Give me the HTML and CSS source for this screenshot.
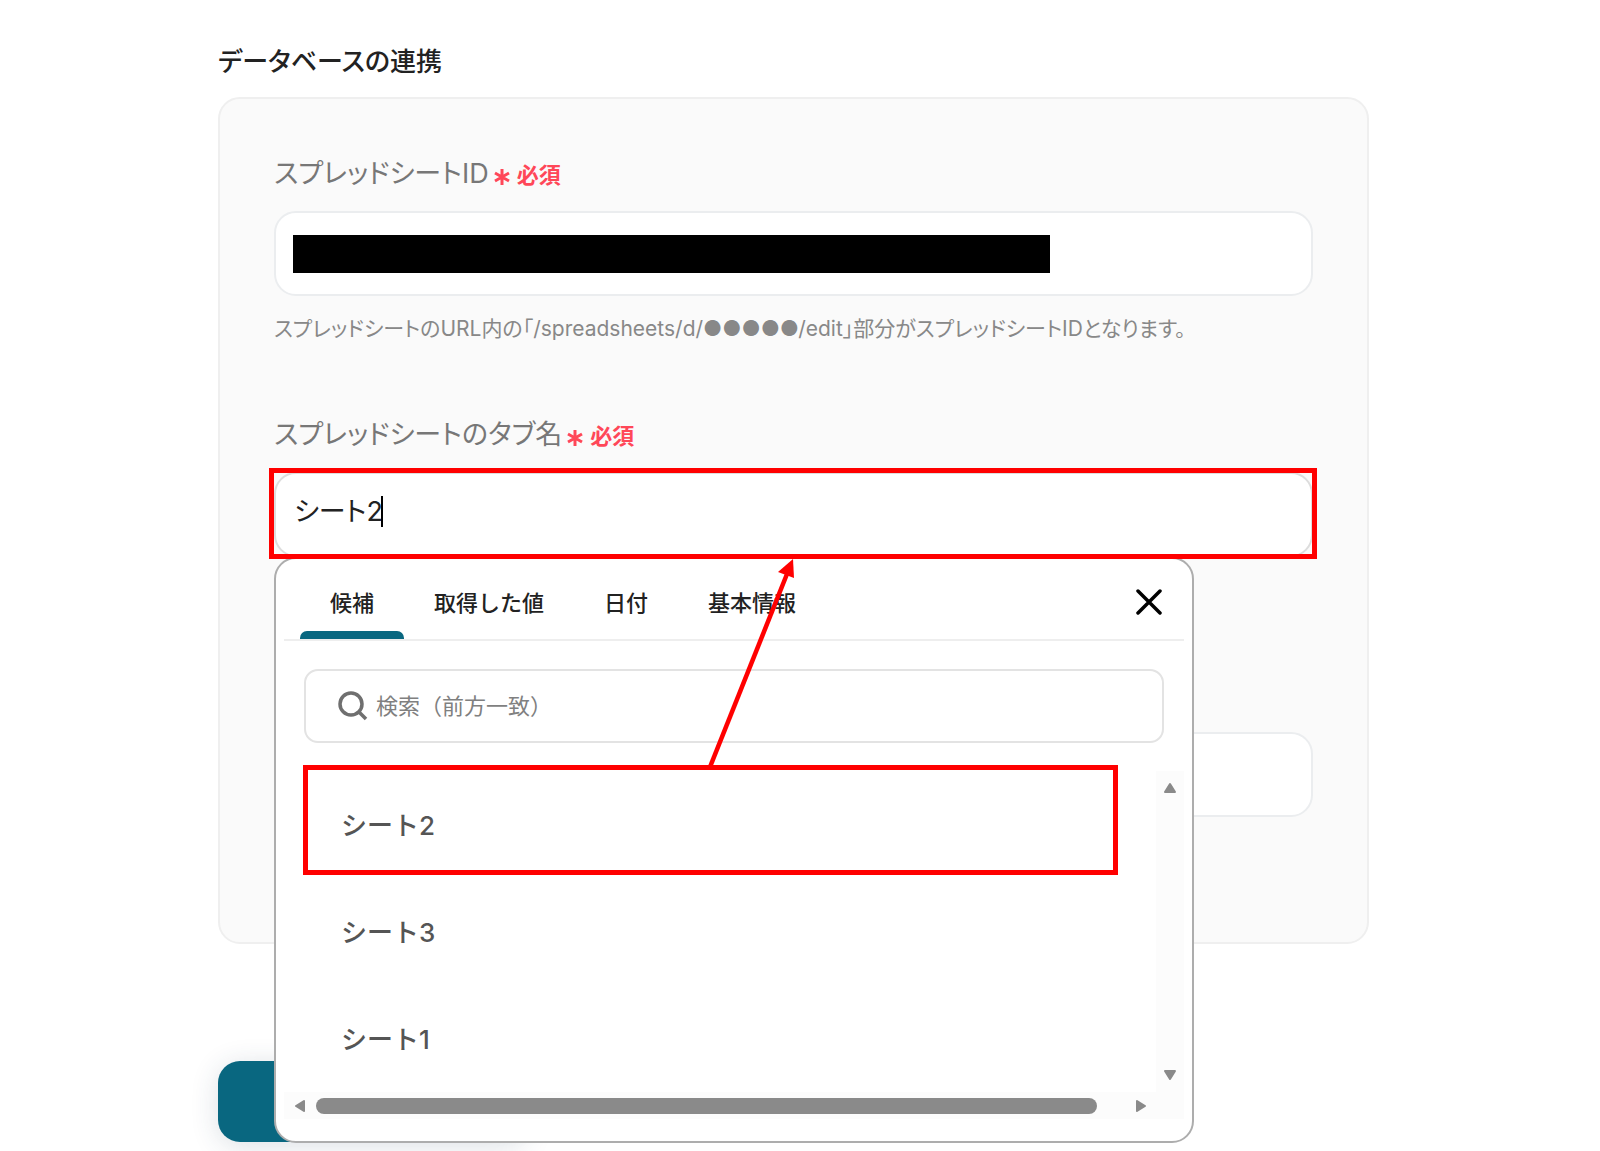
FILE: index.html
```
<!DOCTYPE html>
<html lang="ja">
<head>
    <meta charset="UTF-8">
    <meta name="viewport" content="width=device-width, initial-scale=1.0">
    <title>データベースの連携</title>
    <link rel="stylesheet" href="styles.css">
</head>
<body>
    <main class="page">
        <h1 class="page-title">データベースの連携</h1>

        <section class="panel">
            <div class="field">
                <label class="field-label" for="sheet-id">スプレッドシートID <span class="required"><svg class="asterisk" viewBox="0 0 16 18"><path d="M8 1v16M1 5l14 8M15 5L1 13"/></svg>必須</span></label>
                <div class="input-wrap">
                    <input type="text" class="text-input" id="sheet-id" autocomplete="off">
                    <span class="mask"></span>
                </div>
                <p class="help">スプレッドシートのURL内の「/spreadsheets/d/●●●●●/edit」部分がスプレッドシートIDとなります。</p>
            </div>

            <div class="field">
                <label class="field-label" for="tab-name">スプレッドシートのタブ名 <span class="required"><svg class="asterisk" viewBox="0 0 16 18"><path d="M8 1v16M1 5l14 8M15 5L1 13"/></svg>必須</span></label>
                <div class="input-wrap">
                    <input type="text" class="text-input active" id="tab-name" value="シート2" autocomplete="off">
                    <span class="caret"></span>

                    <!-- Suggestion popup -->
                    <div class="popup">
                        <div class="popup-header">
                            <div class="tabs" role="tablist">
                                <button class="tab active" role="tab" aria-selected="true">候補</button>
                                <button class="tab" role="tab">取得した値</button>
                                <button class="tab" role="tab">日付</button>
                                <button class="tab" role="tab">基本情報</button>
                            </div>
                            <button class="close-button" aria-label="閉じる">
                                <svg width="26" height="26" viewBox="0 0 26 26"><path d="M2 2l22 22M24 2L2 24"/></svg>
                            </button>
                        </div>

                        <label class="search">
                            <svg width="30" height="30" viewBox="0 0 30 30"><circle cx="13" cy="13" r="11"/><path d="M21 21l7 7"/></svg>
                            <input type="text" class="search-input" placeholder="検索（前方一致）">
                        </label>

                        <div class="list-area">
                            <div class="list">
                                <button class="item marked">シート2</button>
                                <button class="item">シート3</button>
                                <button class="item">シート1</button>
                            </div>
                            <div class="scroll-y">
                                <svg width="14" height="12" viewBox="0 0 14 12"><path d="M7 2l5 8H2z"/></svg>
                                <svg width="14" height="12" viewBox="0 0 14 12"><path d="M7 10l5-8H2z"/></svg>
                            </div>
                        </div>
                        <div class="scroll-x">
                            <svg width="12" height="14" viewBox="0 0 12 14"><path d="M2 7l8 5V2z"/></svg>
                            <div class="thumb"></div>
                            <svg width="12" height="14" viewBox="0 0 12 14"><path d="M10 7l-8 5V2z"/></svg>
                        </div>
                    </div>

                    <span class="marker"></span>
                    <svg class="arrow" width="100" height="210" viewBox="0 0 100 210">
                        <path class="arrow-line" d="M10 209L87 16"/>
                        <path class="arrow-head" d="M93 1L78 14l16 6z"/>
                    </svg>
                </div>
            </div>

            <div class="field unlabeled">
                <input type="text" class="text-input" aria-label="値" autocomplete="off">
            </div>
        </section>

        <button class="submit-button" aria-label="保存"></button>
    </main>
</body>
</html>
```

FILE: styles.css
```
:root {
    --primary-color: #096780;
    --border-color: #ebedef;
    --text-color: #222222;
    --label-color: #777777;
    --required-color: #ff4758;
    --marker-color: #ff0000;
    --scroll-color: #8a8a8a;
}

* {
    box-sizing: border-box;
    margin: 0;
    padding: 0;
}

body {
    min-height: 100vh;
    background-color: white;
    color: var(--text-color);
    font-family: Inter, 'Noto Sans CJK JP', sans-serif;
}

button,
input {
    font: inherit;
    color: inherit;
    background: none;
    border: none;
    outline: none;
}

button {
    cursor: pointer;
}

svg {
    display: block;
    flex-shrink: 0;
}

.page {
    padding: 43px 231px 8px 218px;
}

.page-title,
.field-label,
.text-input,
.help {
    font-feature-settings: "palt";
}

.page-title {
    font-size: 26px;
    font-weight: 500;
    line-height: 38px;
    margin-bottom: 16px;
}

.panel {
    display: flex;
    flex-direction: column;
    gap: 71px;
    padding: 56px 54px 75px;
    background-color: #fafafa;
    border: 2px solid #efefef;
    border-radius: 22px;
}

.field {
    min-height: 190px;
}

.field.unlabeled {
    padding-top: 55px;
}

.field-label {
    display: flex;
    align-items: center;
    gap: 5px;
    margin-bottom: 18px;
    font-size: 27px;
    line-height: 38px;
    color: var(--label-color);
}

.required {
    display: flex;
    align-items: center;
    gap: 7px;
    padding-top: 2px;
    font-size: 22px;
    font-weight: 700;
    line-height: 32px;
    color: var(--required-color);
}

.asterisk {
    width: 16px;
    height: 18px;
    margin-top: 4px;
    fill: none;
    stroke: currentColor;
    stroke-width: 3;
}

.input-wrap {
    position: relative;
}

.text-input {
    display: block;
    width: 100%;
    height: 85px;
    padding: 0 18px 10px;
    font-size: 27px;
    background-color: white;
    border: 2px solid var(--border-color);
    border-radius: 22px;
}

.text-input.active {
    border-color: #dddddd;
}

.mask {
    position: absolute;
    top: 24px;
    left: 19px;
    width: 757px;
    height: 38px;
    background-color: black;
}

.caret {
    position: absolute;
    top: 24px;
    left: 107px;
    width: 2px;
    height: 31px;
    background-color: black;
}

.help {
    margin-top: 17px;
    font-size: 21px;
    line-height: 32px;
    color: #888888;
}

/* Suggestion popup */
.popup {
    position: absolute;
    top: 85px;
    left: 0;
    z-index: 10;
    width: 100%;
    max-width: 920px;
    padding: 0 8px 22px;
    background-color: white;
    border: 2px solid #adadad;
    border-radius: 22px;
}

.popup-header {
    display: flex;
    justify-content: space-between;
    align-items: center;
    height: 82px;
    padding: 0 22px 0 16px;
    border-bottom: 2px solid #eeeeee;
}

.tabs {
    display: flex;
    align-self: stretch;
}

.tab {
    position: relative;
    padding: 4px 30px 0;
    font-size: 22px;
    font-weight: 500;
}

.tab.active::after {
    content: "";
    position: absolute;
    left: 0;
    right: 0;
    bottom: 0;
    height: 8px;
    background-color: var(--primary-color);
    border-radius: 7px 7px 0 0;
}

.close-button {
    padding-top: 6px;
}

.close-button svg {
    fill: none;
    stroke: black;
    stroke-width: 3.5;
    stroke-linecap: round;
}

.search {
    display: flex;
    align-items: center;
    gap: 8px;
    height: 74px;
    margin: 28px 20px;
    padding: 0 32px;
    border: 2px solid #e3e3e3;
    border-radius: 14px;
}

.search svg {
    fill: none;
    stroke: #6f6f6f;
    stroke-width: 3.5;
}

.search-input {
    flex: 1;
    font-size: 22px;
}

.search-input::placeholder {
    color: #808080;
}

.list-area {
    display: flex;
}

.list {
    flex: 1;
    padding: 0 38px 0 21px;
}

.item {
    display: block;
    position: relative;
    width: 100%;
    height: 107px;
    padding: 0 0 2px 36px;
    font-size: 26px;
    font-weight: 500;
    text-align: left;
    color: #555555;
}

.item.marked::after {
    content: "";
    position: absolute;
    inset: -6px 0 3px -2px;
    border: 5px solid var(--marker-color);
}

.scroll-y {
    display: flex;
    flex-direction: column;
    justify-content: space-between;
    align-items: center;
    width: 28px;
    padding: 11px 0;
    background-color: #fcfcfc;
}

.scroll-x {
    display: flex;
    align-items: center;
    gap: 10px;
    height: 27px;
    padding: 0 37px 0 10px;
    background-color: #fcfcfc;
}

.scroll-x .thumb {
    flex: 1;
    height: 16px;
    margin-right: 28px;
    background-color: var(--scroll-color);
    border-radius: 8px;
}

.scroll-x svg,
.scroll-y svg {
    fill: var(--scroll-color);
    stroke: var(--scroll-color);
    stroke-width: 2;
    stroke-linejoin: round;
}

/* Red callouts */
.marker {
    position: absolute;
    inset: -4px -4px -2px -5px;
    z-index: 11;
    border: 5px solid var(--marker-color);
    pointer-events: none;
}

.arrow {
    position: absolute;
    top: 86px;
    left: 426px;
    z-index: 11;
    pointer-events: none;
}

.arrow-line {
    fill: none;
    stroke: var(--marker-color);
    stroke-width: 4.5;
}

.arrow-head {
    fill: var(--marker-color);
}

.submit-button {
    display: block;
    width: 310px;
    max-width: 100%;
    height: 81px;
    margin-top: 117px;
    background-color: var(--primary-color);
    border-radius: 22px;
    box-shadow: 0 4px 28px rgba(40, 60, 90, 0.16);
}
```
